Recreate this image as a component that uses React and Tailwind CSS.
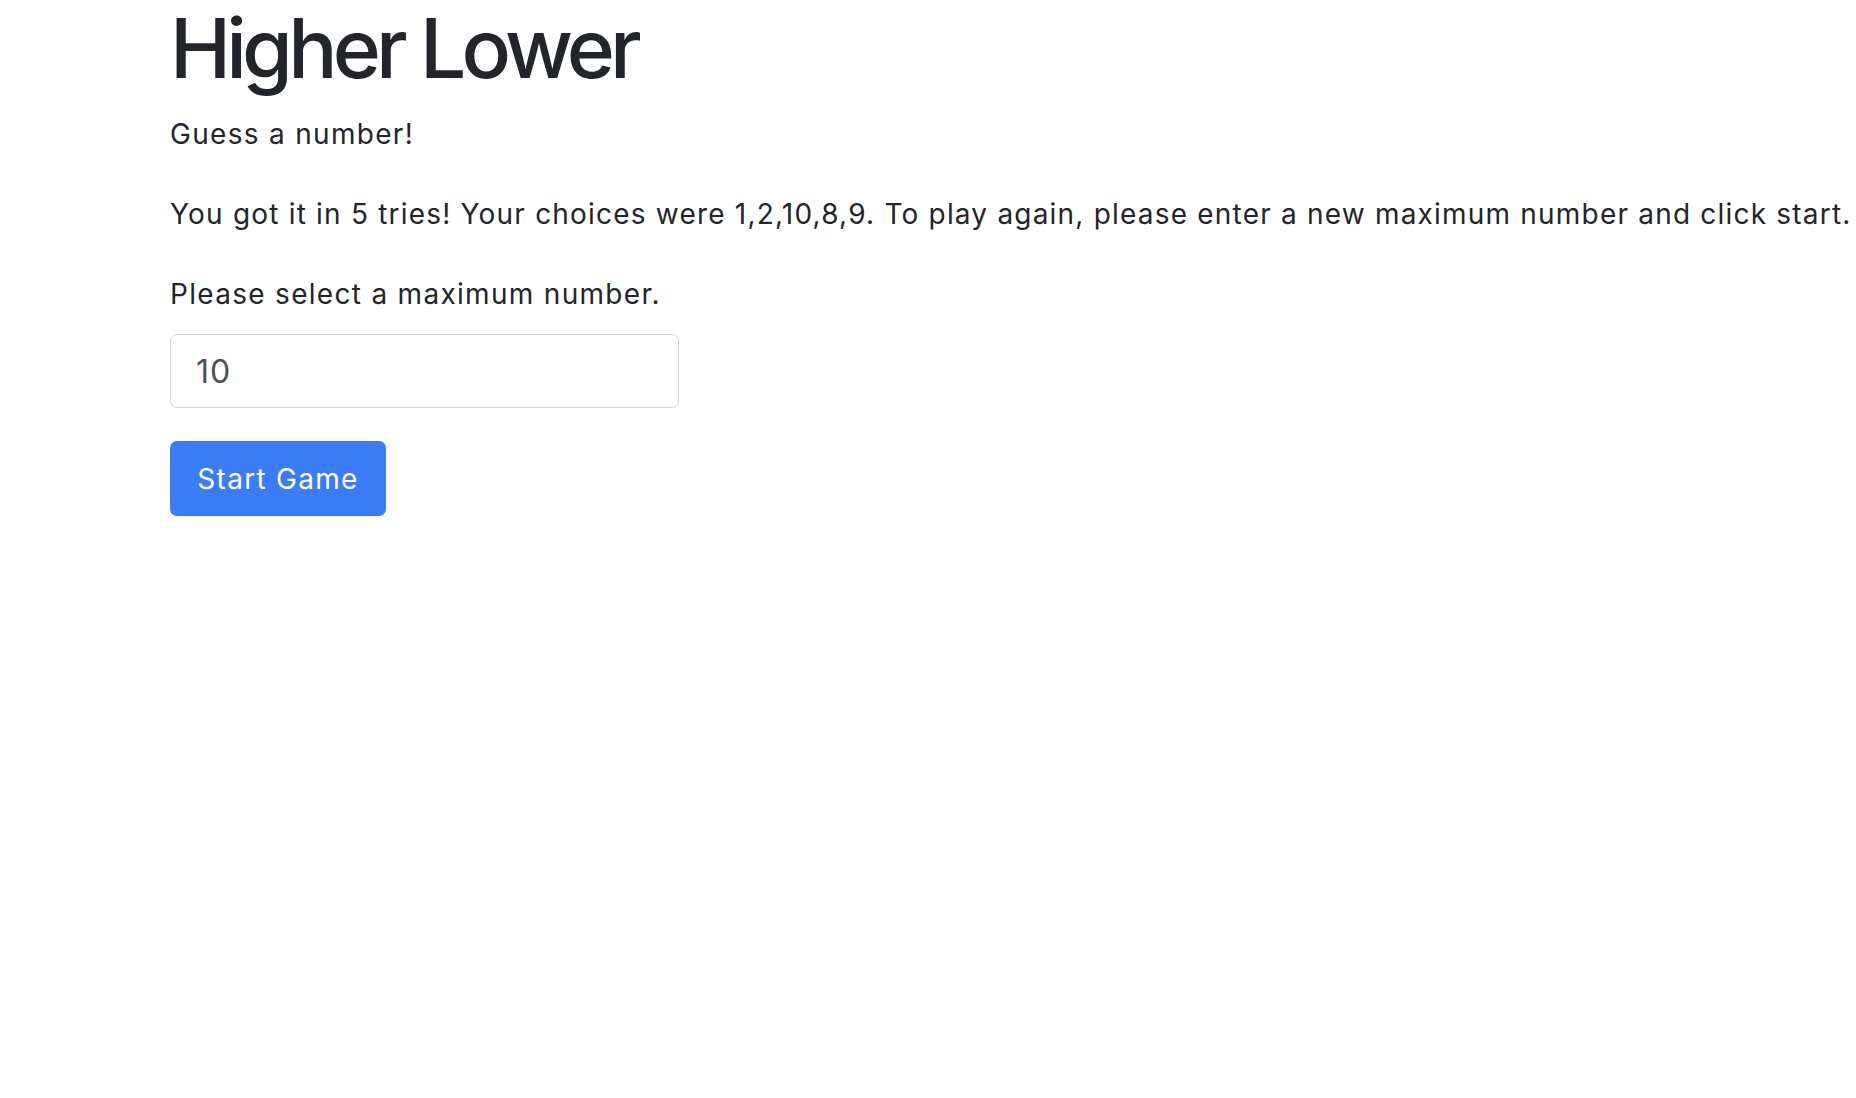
export default function App() {
  return (
    <div className="min-h-screen bg-white text-[#222529]" style={{ fontFamily: 'Inter, "Noto Sans", sans-serif' }}>
      <div className="pl-[170px]">
        <h1 className="text-[82px] leading-[1.2] font-medium tracking-[-4.8px]">Higher Lower</h1>
        <p className="mt-[15px] text-[28px] leading-[1.5] tracking-[1.3px] mb-[38px]">Guess a number!</p>
        <p className="text-[28px] leading-[1.5] tracking-[1.2px] mb-[38px] whitespace-nowrap">
          You got it in 5 tries! Your choices were 1,2,10,8,9. To play again, please enter a new maximum number and click start.
        </p>
        <label htmlFor="max" className="block text-[28px] leading-[1.5] tracking-[1.3px] mb-[19px]">
          Please select a maximum number.
        </label>
        <input
          id="max"
          type="number"
          defaultValue="10"
          className="block w-[509px] h-[74px] border border-[#ced4da] rounded-[7px] px-[25px] text-[32px] tracking-[1px] text-[#495057] outline-none"
        />
        <button className="mt-[33px] w-[216px] h-[75px] rounded-[7px] bg-[#3a7cf6] text-white text-[28px] tracking-[1.3px]">
          Start Game
        </button>
      </div>
    </div>
  );
}
